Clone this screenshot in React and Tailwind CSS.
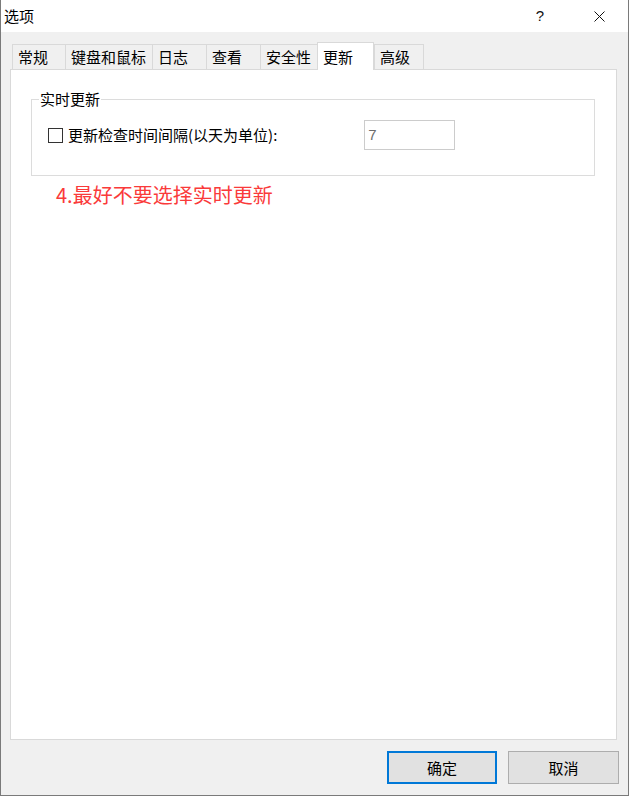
import React from "react";

const font = { fontFamily: '"Noto Sans CJK SC", "Liberation Sans", sans-serif' };

const tabs = [
  { label: "常规", w: 53 },
  { label: "键盘和鼠标", w: 87 },
  { label: "日志", w: 54 },
  { label: "查看", w: 54 },
  { label: "安全性", w: 57 },
  { label: "更新", w: 57, active: true },
  { label: "高级", w: 50 },
];

function Tab({ label, w, active, last }) {
  if (active) {
    return (
      <div
        className="relative z-10 -mb-px flex h-[28px] items-start border-l border-r border-t border-[#d9d9d9] bg-white pl-[5px] pt-[2px] text-[15px] leading-[24px] text-black"
        style={{ width: w }}
      >
        {label}
      </div>
    );
  }
  return (
    <div
      className={
        "flex h-[25px] items-center border-l border-t border-[#d9d9d9] bg-[#f0f0f0] pl-[5px] text-[15px] leading-[24px] text-black " +
        (last ? "border-r" : "")
      }
      style={{ width: w }}
    >
      {label}
    </div>
  );
}

export default function App() {
  return (
    <div
      className="flex h-[796px] w-[629px] flex-col border-b border-l border-r border-[#7a7a7a] bg-[#f0f0f0] text-black"
      style={font}
    >
      {/* Title bar */}
      <div className="flex h-[32px] shrink-0 items-center bg-white">
        <div className="pl-[3px] text-[15px] leading-[20px]">选项</div>
        <div className="flex-1" />
        <div
          className="mr-[50px] text-[15px] leading-[20px] text-[#111]"
          style={{ fontFamily: '"Liberation Sans", sans-serif' }}
        >
          ?
        </div>
        <svg width="11" height="11" viewBox="0 0 11 11" className="mr-[23px]">
          <path d="M0.5 0.5 L10.5 10.5 M10.5 0.5 L0.5 10.5" stroke="#111" strokeWidth="1" fill="none" />
        </svg>
      </div>

      {/* Tabs */}
      <div className="ml-[11px] mt-[10px] flex h-[27px] items-end">
        {tabs.map((t, i) => (
          <Tab key={t.label} {...t} last={i === tabs.length - 1} />
        ))}
      </div>

      {/* Panel */}
      <div className="ml-[9px] h-[671px] w-[607px] border border-[#d9d9d9] bg-white pl-[20px] pt-[29px]">
        <div className="relative h-[77px] w-[564px] border border-[#dcdcdc]">
          <div className="absolute left-[7px] top-[-11px] bg-white px-[1px] text-[15px] leading-[20px]">
            实时更新
          </div>
          <div className="flex items-center pl-[16px] pt-[20px]">
            <div className="h-[15px] w-[15px] shrink-0 border border-[#333333] bg-white" />
            <div className="ml-[5px] text-[15px] leading-[30px]">更新检查时间间隔(以天为单位):</div>
            <div
              className="ml-[87px] flex h-[30px] w-[91px] items-center border border-[#cccccc] bg-white pl-[3px] text-[15px] text-[#6d6d6d]"
              style={{ fontFamily: '"Liberation Sans", sans-serif' }}
            >
              7
            </div>
          </div>
        </div>
        <div className="ml-[25px] mt-[7px] text-[20px] leading-[24px] text-[#fa3a3a]">
          4.最好不要选择实时更新
        </div>
      </div>

      {/* Buttons */}
      <div className="mt-[11px] flex justify-end gap-[11px] pr-[9px]">
        <button className="flex h-[33px] w-[110px] items-center justify-center border-2 border-[#0078d7] bg-[#e1e1e1] text-[15px] leading-[20px]">
          确定
        </button>
        <button className="flex h-[33px] w-[111px] items-center justify-center border border-[#adadad] bg-[#e1e1e1] text-[15px] leading-[20px]">
          取消
        </button>
      </div>
    </div>
  );
}
